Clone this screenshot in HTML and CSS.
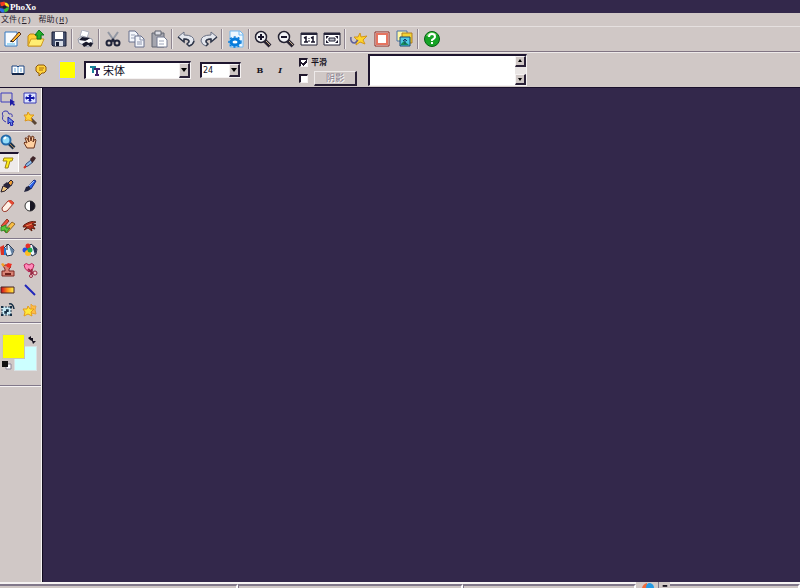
FILE: index.html
```html
<!DOCTYPE html>
<html lang="zh-CN">
<head>
<meta charset="utf-8">
<title>PhoXo</title>
<link rel="stylesheet" href="styles.css">
</head>
<body>
<header class="titlebar">
  <svg class="logo" viewBox="0 0 11 12"><path d="M0 1L5 0 6 5 1 5Z" fill="#f23a20"/><path d="M5 1Q10 1 10 6L6 5Z" fill="#ffe21c"/><path d="M10 6Q10 11 5 12L4 8Z" fill="#35bd38"/><path d="M0 7L4 8 5 12H2L0 10Z" fill="#2b6ee5"/><circle cx="5" cy="6" r="2" fill="#201634"/></svg>
  <h1>PhoXo</h1>
</header>
<nav class="menu"><a href="#">文件(<u>F</u>)</a><a href="#">帮助(<u>H</u>)</a></nav>
<div class="toolbar">
  <button aria-label="New"><svg viewBox="0 0 18 18"><path d="M1 2H13V16H1Z" fill="#f7fbff" stroke="#347bc2"/><path d="M3 13H11V15H3Z" fill="#a5dcf5"/><path d="M7 11L15 2 17 4 9 12Z" fill="#ffb72e" stroke="#5a301c"/><path d="M6 12L7 10 9 12Z" fill="#222"/></svg></button>
  <button aria-label="Open"><svg viewBox="0 0 18 18"><path d="M1 16V6L3 4H7L9 6H14V16Z" fill="#ffce37" stroke="#bd8516"/><path d="M1 16L4 9H17L14 16Z" fill="#ffee72" stroke="#d09b24"/><path d="M10 9V5H8L12 0 17 5H14V9Z" fill="#22af29" stroke="#08761c"/></svg></button>
  <button aria-label="Save"><svg viewBox="0 0 18 18"><path d="M2 2H16V16H3L2 15Z" fill="#46516e" stroke="#171d34"/><path d="M5 2H13V9H5Z" fill="#fff"/><path d="M5 11H13V16H5Z" fill="#d6dce6"/><path d="M6 12H9V16H6Z" fill="#171d34"/></svg></button>
  <i class="sep"></i>
  <button aria-label="Print"><svg viewBox="0 0 18 18"><path d="M3 6L5 0 12 2 10 8Z" fill="#fff" stroke="#aeb2bf"/><path d="M1 9L5 6 15 9 16 14 11 17 2 13Z" fill="#f4f5f9" stroke="#9499a8"/><path d="M5 7L13 8 9 11 2 10ZM10 11L16 13 14 17 11 15 7 17 5 14Z" fill="#18192b"/><path d="M8 11L13 9 15 11 12 13Z" fill="#fff"/></svg></button>
  <i class="sep"></i>
  <button aria-label="Cut"><svg viewBox="0 0 18 18"><path d="M4 2L11 12M14 2L7 12" stroke="#9297a3" stroke-width="2"/><path d="M8 9L11 12M10 9L7 12" stroke="#20243a" stroke-width="2"/><circle cx="5" cy="13" r="2.5" fill="none" stroke="#20243a" stroke-width="2"/><circle cx="13" cy="13" r="2.5" fill="none" stroke="#20243a" stroke-width="2"/></svg></button>
  <button aria-label="Copy"><svg viewBox="0 0 18 18"><path d="M2 1H8L11 4V12H2Z" fill="#f4f6fb" stroke="#68708d"/><path d="M4 5H8M4 8H8" stroke="#9ba3b8"/><path d="M8 6H14L17 9V17H8Z" fill="#f4f6fb" stroke="#68708d"/><path d="M13 6V10H17M10 12H15M10 14H15" fill="none" stroke="#8c94ad"/></svg></button>
  <button aria-label="Paste"><svg viewBox="0 0 18 18"><path d="M2 3H14V17H2Z" fill="#a5a6af" stroke="#606471"/><path d="M5 1H11V5H5Z" fill="#dedfe6" stroke="#606471"/><path d="M7 7H14L17 10V17H7Z" fill="#fff" stroke="#747b91"/><path d="M9 11H14M9 14H14" stroke="#9ba3b8"/></svg></button>
  <i class="sep"></i>
  <button aria-label="Undo"><svg viewBox="0 0 18 18"><path d="M1 7L7 2V5Q17 5 17 11 16 15 12 16L10 14Q13 12 12 10 11 9 7 9V12Z" fill="#e4e7ee" stroke="#697084"/><path d="M1 7L7 12V9Q12 9 12 12L10 14 12 16Q16 15 17 11" fill="none" stroke="#303749" stroke-width="1.5"/></svg></button>
  <button aria-label="Redo"><svg viewBox="0 0 18 18"><path d="M17 7L11 2V5Q1 5 1 11 2 15 6 16L8 14Q5 12 6 10 7 9 11 9V12Z" fill="#e4e7ee" stroke="#697084"/><path d="M17 7L11 12V9Q6 9 6 12L8 14 6 16" fill="none" stroke="#303749" stroke-width="1.5"/></svg></button>
  <i class="sep"></i>
  <button aria-label="Batch"><svg viewBox="0 0 18 18"><path d="M3 1H13L16 4V17H3Z" fill="#edf8ff" stroke="#73b9f2"/><path d="M12 1V5H16" fill="none" stroke="#73b9f2"/><ellipse cx="8" cy="12" rx="4" ry="3" fill="#fff" stroke="#087cdb" stroke-width="3"/><ellipse cx="8" cy="12" rx="6" ry="5" fill="none" stroke="#087cdb" stroke-width="1.5" stroke-dasharray="2 2"/></svg></button>
  <i class="sep"></i>
  <button aria-label="Zoom in"><svg viewBox="0 0 18 18"><path d="M10 10L16 16" stroke="#282331" stroke-width="4"/><path d="M12 11L16 15" stroke="#c6af88"/><circle cx="7" cy="7" r="5.5" fill="#f1f2f5" stroke="#252332" stroke-width="1.5"/><path d="M4 7H10M7 4V10" stroke="#171429" stroke-width="2"/></svg></button>
  <button aria-label="Zoom out"><svg viewBox="0 0 18 18"><path d="M10 10L16 16" stroke="#282331" stroke-width="4"/><path d="M12 11L16 15" stroke="#c6af88"/><circle cx="7" cy="7" r="5.5" fill="#f1f2f5" stroke="#252332" stroke-width="1.5"/><path d="M4 7H10" stroke="#171429" stroke-width="2"/></svg></button>
  <button aria-label="Actual size"><svg viewBox="0 0 18 18"><path d="M1 3H17V15H1Z" fill="#fff" stroke="#252438"/><path d="M1 4H17" stroke="#252438" stroke-width="2"/><path d="M4 8L6 7V12M4 12H8M11 8L13 7V12M11 12H15" fill="none" stroke="#171429" stroke-width="1.5"/><path d="M9 8V9M9 10V12" stroke="#171429"/></svg></button>
  <button aria-label="Fit window"><svg viewBox="0 0 18 18"><path d="M1 3H17V15H1Z" fill="#fff" stroke="#252438"/><path d="M1 4H17" stroke="#252438" stroke-width="2"/><path d="M6 8H12V11H6Z" fill="#b9bbc5" stroke="#252438"/><path d="M3 6H6L3 9ZM15 6H12L15 9ZM3 13H6L3 10ZM15 13H12L15 10Z" fill="#171429"/></svg></button>
  <i class="sep"></i>
  <button aria-label="Effects"><svg viewBox="0 0 18 18"><path d="M10 3L11 7 17 6 13 10 15 14 10 12 6 15 7 10 4 7 8 7Z" fill="#ffd529" stroke="#d3951b"/><path d="M1 7Q0 13 5 13L8 10" fill="none" stroke="#5d5f9a" stroke-width="1.5"/></svg></button>
  <button aria-label="Frame"><svg viewBox="0 0 18 18"><path d="M2 2H16V16H2Z" fill="#fff" stroke="#8b241c"/><path d="M4 4H14V14H4Z" fill="#fff" stroke="#e57460" stroke-width="2"/></svg></button>
  <button aria-label="Layers"><svg viewBox="0 0 18 18"><path d="M1 1H11V11H1Z" fill="#fff7a4" stroke="#4b73aa"/><path d="M6 3H16V13H6Z" fill="#f2d435" stroke="#b17d20"/><path d="M4 7H14V16H4Z" fill="#51c9e4" stroke="#174873"/><path d="M5 14L8 11 13 15H5Z" fill="#168b5a"/><path d="M9 9V14M7 11L9 9 11 11" stroke="#163c65" fill="none"/></svg></button>
  <i class="sep"></i>
  <button aria-label="Help"><svg viewBox="0 0 18 18"><circle cx="9" cy="9" r="7.5" fill="#16a326" stroke="#076015"/><path d="M4 6Q8 1 13 5" fill="none" stroke="#73db65" stroke-width="2"/><path d="M6 7Q6 4 9 4 12 4 12 7 12 8 9 10V11M9 12V14" fill="none" stroke="#fff" stroke-width="2"/></svg></button>
</div>
<section class="options">
  <button class="mini" aria-label="Text library"><svg viewBox="0 0 14 12"><path d="M1 2H6L7 3 8 2H13V10H1Z" fill="#fff" stroke="#1c4783"/><path d="M7 3V10M3 5H5M3 7H5M9 5H11M9 7H11" stroke="#66a2d2"/><path d="M1 10H13" stroke="#152749" stroke-width="2"/></svg></button>
  <button class="mini" aria-label="Text balloon"><svg viewBox="0 0 14 12"><path d="M4 1H10L12 3V7L10 9H8L5 12V9H4L2 7V3Z" fill="#ffd33c" stroke="#8d580c"/><path d="M5 4H10M5 6H9" stroke="#a96c0a"/></svg></button>
  <button class="text-color" aria-label="Text color"></button>
  <label class="combo font"><svg viewBox="0 0 12 12"><path d="M1 2H7M4 2V8" stroke="#168098" stroke-width="2"/><path d="M5 4H11M8 4V10M6 10H10" stroke="#43256e" stroke-width="2"/></svg><select aria-label="Font"><option>宋体</option></select><span class="drop"><svg viewBox="0 0 8 8"><path d="M1 2H7L4 6Z"/></svg></span></label>
  <label class="combo size"><select aria-label="Font size"><option>24</option></select><span class="drop"><svg viewBox="0 0 8 8"><path d="M1 2H7L4 6Z"/></svg></span></label>
  <div class="style-buttons"><button aria-label="Bold"><b>B</b></button><button aria-label="Italic"><b><em>I</em></b></button></div>
  <div class="checks">
    <div class="check-row"><input type="checkbox" id="smooth" checked><label for="smooth">平滑</label></div>
    <div class="check-row"><input type="checkbox" aria-label="阴影"><button class="shadow" disabled>阴影</button></div>
  </div>
  <div class="text-input"><textarea aria-label="Text"></textarea><div class="scroll"><button aria-label="Scroll up"><svg viewBox="0 0 8 8"><path d="M2 5H6L4 2Z"/></svg></button><button aria-label="Scroll down"><svg viewBox="0 0 8 8"><path d="M2 3H6L4 6Z"/></svg></button></div></div>
</section>
<div class="work">
  <aside class="tools">
    <div class="group">
      <button aria-label="Select"><svg viewBox="0 0 16 16"><path d="M1 3H12V12H1Z" fill="none" stroke="#3c3cbd"/><path d="M10 9V16L12 14 14 16 15 14 13 13 15 12Z" fill="#1e1ca5"/></svg></button>
      <button aria-label="Move"><svg viewBox="0 0 16 16"><path d="M2 3H14V13H2Z" fill="#dfe6ff" stroke="#393bb3"/><path d="M4 8H12M8 5V11" stroke="#1419a8" stroke-width="2"/><path d="M3 8L5 6V10ZM13 8L11 6V10ZM8 4L6 6H10ZM8 12L6 10H10Z" fill="#1419a8"/></svg></button>
      <button aria-label="Lasso"><svg viewBox="0 0 16 16"><path d="M6 12Q1 10 3 6 1 2 5 1 8 0 9 4 13 3 12 7" fill="none" stroke="#3937ae"/><path d="M8 7V14L10 12 11 16 13 15 12 12 14 12Z" fill="#6d8fe6" stroke="#1719a9"/></svg></button>
      <button aria-label="Magic wand"><svg viewBox="0 0 16 16"><path d="M8 8L14 14" stroke="#5b4635" stroke-width="3"/><path d="M6 2L8 5 12 5 9 8 10 11 6 10 3 11 4 8 2 5 5 5Z" fill="#ffd43a" stroke="#db941c"/></svg></button>
    </div>
    <div class="group">
      <button aria-label="Zoom"><svg viewBox="0 0 16 16"><path d="M9 9L14 14" stroke="#1c334b" stroke-width="4"/><path d="M10 10L14 14" stroke="#ac8053"/><circle cx="6" cy="6" r="4.5" fill="#92dcfa" stroke="#236aaa" stroke-width="2"/><path d="M4 5L6 3" stroke="#fff" stroke-width="2"/></svg></button>
      <button aria-label="Hand"><svg viewBox="0 0 16 16"><path d="M5 14L2 9 3 8 5 9 3 4 5 4 7 8 6 2 8 2 9 7 10 2 12 3 11 8 13 5 14 6 12 14Z" fill="#ffd0a0" stroke="#69311a"/></svg></button>
      <button class="active" aria-label="Text"><svg viewBox="0 0 16 16"><path d="M4 3H13L12 6H10L8 13H5L7 6H3Z" fill="#ffee18" stroke="#9d8216"/></svg></button>
      <button aria-label="Eyedropper"><svg viewBox="0 0 16 16"><path d="M3 13L4 10 9 6 11 8 6 12Z" fill="#8dbbe8" stroke="#344c7a"/><path d="M8 5L11 2 14 4 12 7 10 9Z" fill="#40262a"/><path d="M2 14L4 12" stroke="#d92b1c" stroke-width="2"/></svg></button>
    </div>
    <div class="group">
      <button aria-label="Pen"><svg viewBox="0 0 16 16"><path d="M1 14L3 8 8 10 5 13Z" fill="#efc782" stroke="#291f28"/><path d="M8 5L11 2 13 4 11 8Z" fill="#ed9c34" stroke="#292330"/><path d="M3 7L7 4 11 8 8 11Z" fill="#29263c"/></svg></button>
      <button aria-label="Brush"><svg viewBox="0 0 16 16"><path d="M6 9L12 2 14 3 9 11Z" fill="#2d63e8" stroke="#142b86"/><path d="M2 14L4 9 7 8 9 11 6 13Z" fill="#22243e"/><path d="M7 8L12 3" stroke="#a5cbff"/></svg></button>
      <button aria-label="Eraser"><svg viewBox="0 0 16 16"><path d="M2 10L8 3Q11 1 14 5L7 13Q2 15 2 10Z" fill="#fff0e5" stroke="#963629"/><path d="M8 3Q11 1 14 5L12 7 9 4Z" fill="#e64933"/></svg></button>
      <button aria-label="Contrast"><svg viewBox="0 0 16 16"><circle cx="8" cy="8" r="5" fill="#fff" stroke="#333"/><path d="M8 3A5 5 0 0 1 8 13Z" fill="#171522"/></svg></button>
      <button aria-label="Color replace"><svg viewBox="0 0 16 16"><path d="M1 8L7 1 9 3 3 10Z" fill="#ef5139" stroke="#8b3524"/><path d="M4 13L12 4 15 6 7 15Z" fill="#f9bf45" stroke="#936929"/><path d="M1 9L6 7 6 10 10 10 6 15 5 12 1 13Z" fill="#5cc83a" stroke="#31852a"/></svg></button>
      <button aria-label="Smudge"><svg viewBox="0 0 16 16"><path d="M2 7Q9 2 14 4L10 6 14 7 11 8 13 11 9 10 10 13 6 10 2 12 5 9 1 9Z" fill="#b62e1d" stroke="#60200f"/><path d="M4 8L10 6" stroke="#e98a55"/></svg></button>
    </div>
    <div class="group">
      <button aria-label="Fill"><svg viewBox="0 0 16 16"><path d="M4 6L8 2 14 8 12 13 7 14Z" fill="#e4f0fa" stroke="#29364d"/><path d="M9 4L14 8 12 13Z" fill="#6380a2"/><path d="M7 2V8" stroke="#1c1c2b"/><path d="M0 5L4 3V13H1Z" fill="#dc3325"/><path d="M4 6H6V13H4Z" fill="#2879d1"/></svg></button>
      <button aria-label="Color fill"><svg viewBox="0 0 16 16"><path d="M5 6L9 2 15 7 14 12 10 14Z" fill="#edf6ff" stroke="#29364d"/><path d="M10 3L15 7 13 13Z" fill="#263454"/><circle cx="6" cy="4" r="2.5" fill="#e62f27"/><circle cx="3" cy="8" r="2.5" fill="#2949df"/><circle cx="6" cy="11" r="3" fill="#ffbd20"/><circle cx="8" cy="8" r="2.5" fill="#20a850"/></svg></button>
      <button aria-label="Stamp"><svg viewBox="0 0 16 16"><path d="M5 9V7Q2 4 5 3H10Q12 5 9 7V9H14V14H2V9Z" fill="#d98476" stroke="#7c251e"/><path d="M1 2L3 1 5 3 3 5Z" fill="#f69e21"/><path d="M6 3L8 1 12 2 10 6 7 5Z" fill="#ef3022"/><path d="M5 12H11" stroke="#6f211b" stroke-width="2"/></svg></button>
      <button aria-label="Heart scissors"><svg viewBox="0 0 16 16"><path d="M2 3Q4 0 7 3 10 0 12 3 12 7 7 10 2 7 2 3Z" fill="#ff8aba" stroke="#b92357"/><path d="M6 7L12 12M10 7L9 13" stroke="#9a2944" stroke-width="2"/><circle cx="13" cy="11" r="2" fill="#efd4d2" stroke="#9a2944"/><circle cx="9" cy="14" r="1.5" fill="#efd4d2" stroke="#9a2944"/></svg></button>
      <button aria-label="Gradient"><svg viewBox="0 0 16 16"><defs><linearGradient id="g"><stop stop-color="#c80820"/><stop offset=".5" stop-color="#ff8e18"/><stop offset="1" stop-color="#fff44d"/></linearGradient></defs><path d="M1 5H14V11H1Z" fill="url(#g)" stroke="#492323"/></svg></button>
      <button aria-label="Line"><svg viewBox="0 0 16 16"><path d="M3 3L13 13" stroke="#2026ba" stroke-width="2"/></svg></button>
      <button aria-label="Transform"><svg viewBox="0 0 16 16"><path d="M2 5H11V13H2Z" fill="#c9ebf5" stroke="#253a50" stroke-dasharray="2 1"/><path d="M1 4H3V6H1ZM10 4H12V6H10ZM1 12H3V14H1ZM10 12H12V14H10Z" fill="#173046"/><path d="M9 2Q13 1 14 7M5 11L8 8M6 8H8V10M5 9V11H7" fill="none" stroke="#173046" stroke-width="1.5"/></svg></button>
      <button aria-label="Shape"><svg viewBox="0 0 16 16"><path d="M9 2L11 4 14 4 13 8 14 12 9 11Z" fill="#ffbd46" stroke="#e8a43a"/><path d="M6 4L8 7 12 7 9 10 10 14 6 12 2 14 3 10 1 7 5 7Z" fill="#ffe83b" stroke="#e49b1a"/></svg></button>
    </div>
    <div class="colors">
      <button class="fore" aria-label="Foreground color"></button>
      <button class="swap" aria-label="Swap colors"><svg viewBox="0 0 8 8"><path d="M0 2L3 0V2H5V5H8L5 8 4 5 2 4Z" fill="#15101e"/></svg></button>
      <button class="reset" aria-label="Default colors"><svg viewBox="0 0 10 10"><path d="M4 4H9V9H4Z" fill="#fff" stroke="#898395"/><path d="M0 1H6V7H0Z" fill="#111"/></svg></button>
      <button class="back" aria-label="Background color"></button>
    </div>
  </aside>
  <main class="canvas"></main>
</div>
<footer class="status"><span></span><span></span><span></span><div class="tray"><svg viewBox="0 0 16 6"><path d="M2 6Q3 2 7 1V6Z" fill="#ef6939"/><path d="M6 6Q6 1 10 1 14 2 14 6Z" fill="#229be5"/></svg><svg viewBox="0 0 12 6"><path d="M4 3H9V5H4Z" fill="#17131e"/></svg></div><span></span></footer>
</body>
</html>
```
FILE: styles.css
```css
* { box-sizing: border-box; }
body {
  margin: 0;
  height: 100vh;
  display: flex;
  flex-direction: column;
  overflow: hidden;
  background: #d0c8c6;
  color: #17131e;
  font-family: "Liberation Sans", "Noto Sans CJK SC", sans-serif;
}
button { padding: 0; border: 0; background: none; color: inherit; font: inherit; display: grid; place-items: center; }
svg { display: block; }
.titlebar { height: 13px; flex: none; display: flex; align-items: center; background: #33284b; color: #fff; }
.logo { width: 10px; height: 12px; }
h1 { margin: 0; font: bold 9px/12px "Liberation Serif", serif; }
.menu { height: 13px; flex: none; display: flex; gap: 7px; padding-left: 1px; font: 8px/13px "Liberation Mono", "Noto Sans CJK SC", monospace; }
.menu a { color: #29222f; text-decoration: none; white-space: nowrap; }
.toolbar { height: 26px; flex: none; display: flex; align-items: center; border-top: 1px solid #e5e0df; border-bottom: 1px solid #817583; }
.toolbar button { width: 23px; height: 24px; }
.toolbar button:first-child { margin-left: 1px; }
.toolbar button svg { width: 18px; height: 18px; }
.sep { width: 4px; height: 20px; background: linear-gradient(90deg, transparent 1px, #8f8590 1px, #8f8590 2px, #eeeaea 2px, #eeeaea 3px, transparent 3px); }
.options { height: 36px; flex: none; display: flex; align-items: center; padding-left: 6px; border-top: 1px solid #eeeaea; border-bottom: 1px solid #19102c; }
.mini { width: 23px; height: 22px; }
.mini svg { width: 14px; height: 12px; }
.text-color { width: 17px; height: 18px; margin: 0 8px 0 7px; background: #ff0; border: 1px solid #c3c3ef; }
.combo { display: flex; align-items: center; background: #fff; border: 2px solid #1e152f; border-right: 1px solid #f5f2f2; border-bottom: 1px solid #f5f2f2; }
.combo select { appearance: none; flex: 1; min-width: 0; padding: 0 0 0 2px; border: 0; border-radius: 0; background: none; color: #100c1c; font: 11px/14px "Liberation Sans", "Noto Sans CJK SC", sans-serif; }
.font { width: 107px; height: 18px; }
.font > svg { width: 12px; height: 12px; margin-left: 3px; }
.size { width: 41px; height: 16px; margin-left: 9px; }
.size select { font: 8px/12px "DejaVu Sans", sans-serif; padding-left: 1px; }
.drop, .scroll button { width: 11px; height: 12px; display: grid; place-items: center; background: #d0c8c6; border: 1px solid #f5f2f2; border-right: 2px solid #292036; border-bottom: 2px solid #292036; }
.drop { align-self: stretch; height: auto; pointer-events: none; }
.drop svg, .scroll svg { width: 8px; height: 8px; }
.style-buttons { display: flex; margin-left: 9px; font: 8px/20px "DejaVu Serif", serif; }
.style-buttons button { width: 20px; height: 20px; }
.checks { display: grid; grid-template-rows: 16px 16px; margin-left: 9px; }
.check-row { display: flex; align-items: center; font: bold 8px/14px "Noto Sans CJK SC", sans-serif; }
.check-row input { appearance: none; width: 9px; height: 9px; margin: 0; background: #fff; border: 1px solid #f5f2f2; border-top: 2px solid #20182c; border-left: 2px solid #20182c; }
.check-row input:checked { background: linear-gradient(45deg, transparent 25%, #20182c 25%, #20182c 45%, transparent 45%) 0 0 / 3px 6px no-repeat, linear-gradient(135deg, transparent 40%, #20182c 40%, #20182c 65%, transparent 65%) 2px 0 / 4px 6px no-repeat, #fff; }
.check-row label { margin-left: 3px; }
.shadow { width: 43px; height: 15px; margin-left: 6px; color: #89808e; font: 9px/12px "Noto Sans CJK SC", sans-serif; text-shadow: 1px 1px #fff; border: 1px solid #eeeaea; border-right: 2px solid #292036; border-bottom: 2px solid #292036; }
.text-input { width: 159px; height: 32px; margin-left: 11px; display: flex; background: #fff; border: 2px solid #1e152f; border-right: 1px solid #f5f2f2; border-bottom: 1px solid #f5f2f2; }
textarea { flex: 1; min-width: 0; padding: 1px; border: 0; resize: none; outline: 0; background: #fff; font: 10px/12px "Liberation Sans", sans-serif; overflow: hidden; }
.scroll { display: flex; flex-direction: column; justify-content: space-between; background: #e9e5e4; }
.scroll button { height: 11px; }
.work { flex: 1; min-height: 0; display: flex; }
.tools { width: 42px; flex: none; border-right: 1px solid #f5f2f2; }
.group { display: grid; grid-template-columns: 19px 22px; grid-auto-rows: 20px; padding-bottom: 4px; background: linear-gradient(#81788a, #81788a) 0 calc(100% - 1px) / 41px 1px no-repeat, linear-gradient(#f5f2f2, #f5f2f2) 0 100% / 41px 1px no-repeat; }
.group svg { width: 16px; height: 16px; }
.group button:nth-child(odd) { justify-items: start; }
.group .active { background: #eeeaea; border-top: 2px solid #1e152f; border-right: 1px solid #fff; }
.colors { height: 62px; display: grid; grid-template-columns: 12px 12px 12px; grid-template-rows: 12px 12px 14px; padding: 10px 0 0 2px; border-bottom: 1px solid #81788a; box-shadow: 0 1px #f5f2f2; }
.fore { grid-area: 1 / 1 / 3 / 3; width: 23px; height: 25px; background: #ff0; border: 1px solid #c9c6b8; z-index: 1; }
.back { grid-area: 2 / 2 / 4 / 4; width: 23px; height: 25px; background: #cff; border: 1px solid #d8e2e5; }
.swap { grid-area: 1 / 3; }
.swap svg { width: 8px; height: 8px; }
.reset { grid-area: 3 / 1; justify-items: start; align-items: center; z-index: 1; }
.reset svg { width: 10px; height: 10px; }
.canvas { flex: 1; background: #33284b; border-left: 1px solid #100a1d; }
.status { height: 6px; flex: none; display: grid; grid-template-columns: 238fr 225fr 173fr 34px 130fr; }
.status span { border-top: 2px solid #81788a; border-right: 2px solid #fff; box-shadow: 0 -2px #f5f2f2; margin-top: 2px; }
.status span + span { border-left: 1px solid #81788a; }
.tray { display: flex; gap: 2px; padding-left: 4px; }
.tray svg { width: 16px; height: 6px; }
.tray svg + svg { width: 12px; border-left: 1px solid #81788a; }
```
